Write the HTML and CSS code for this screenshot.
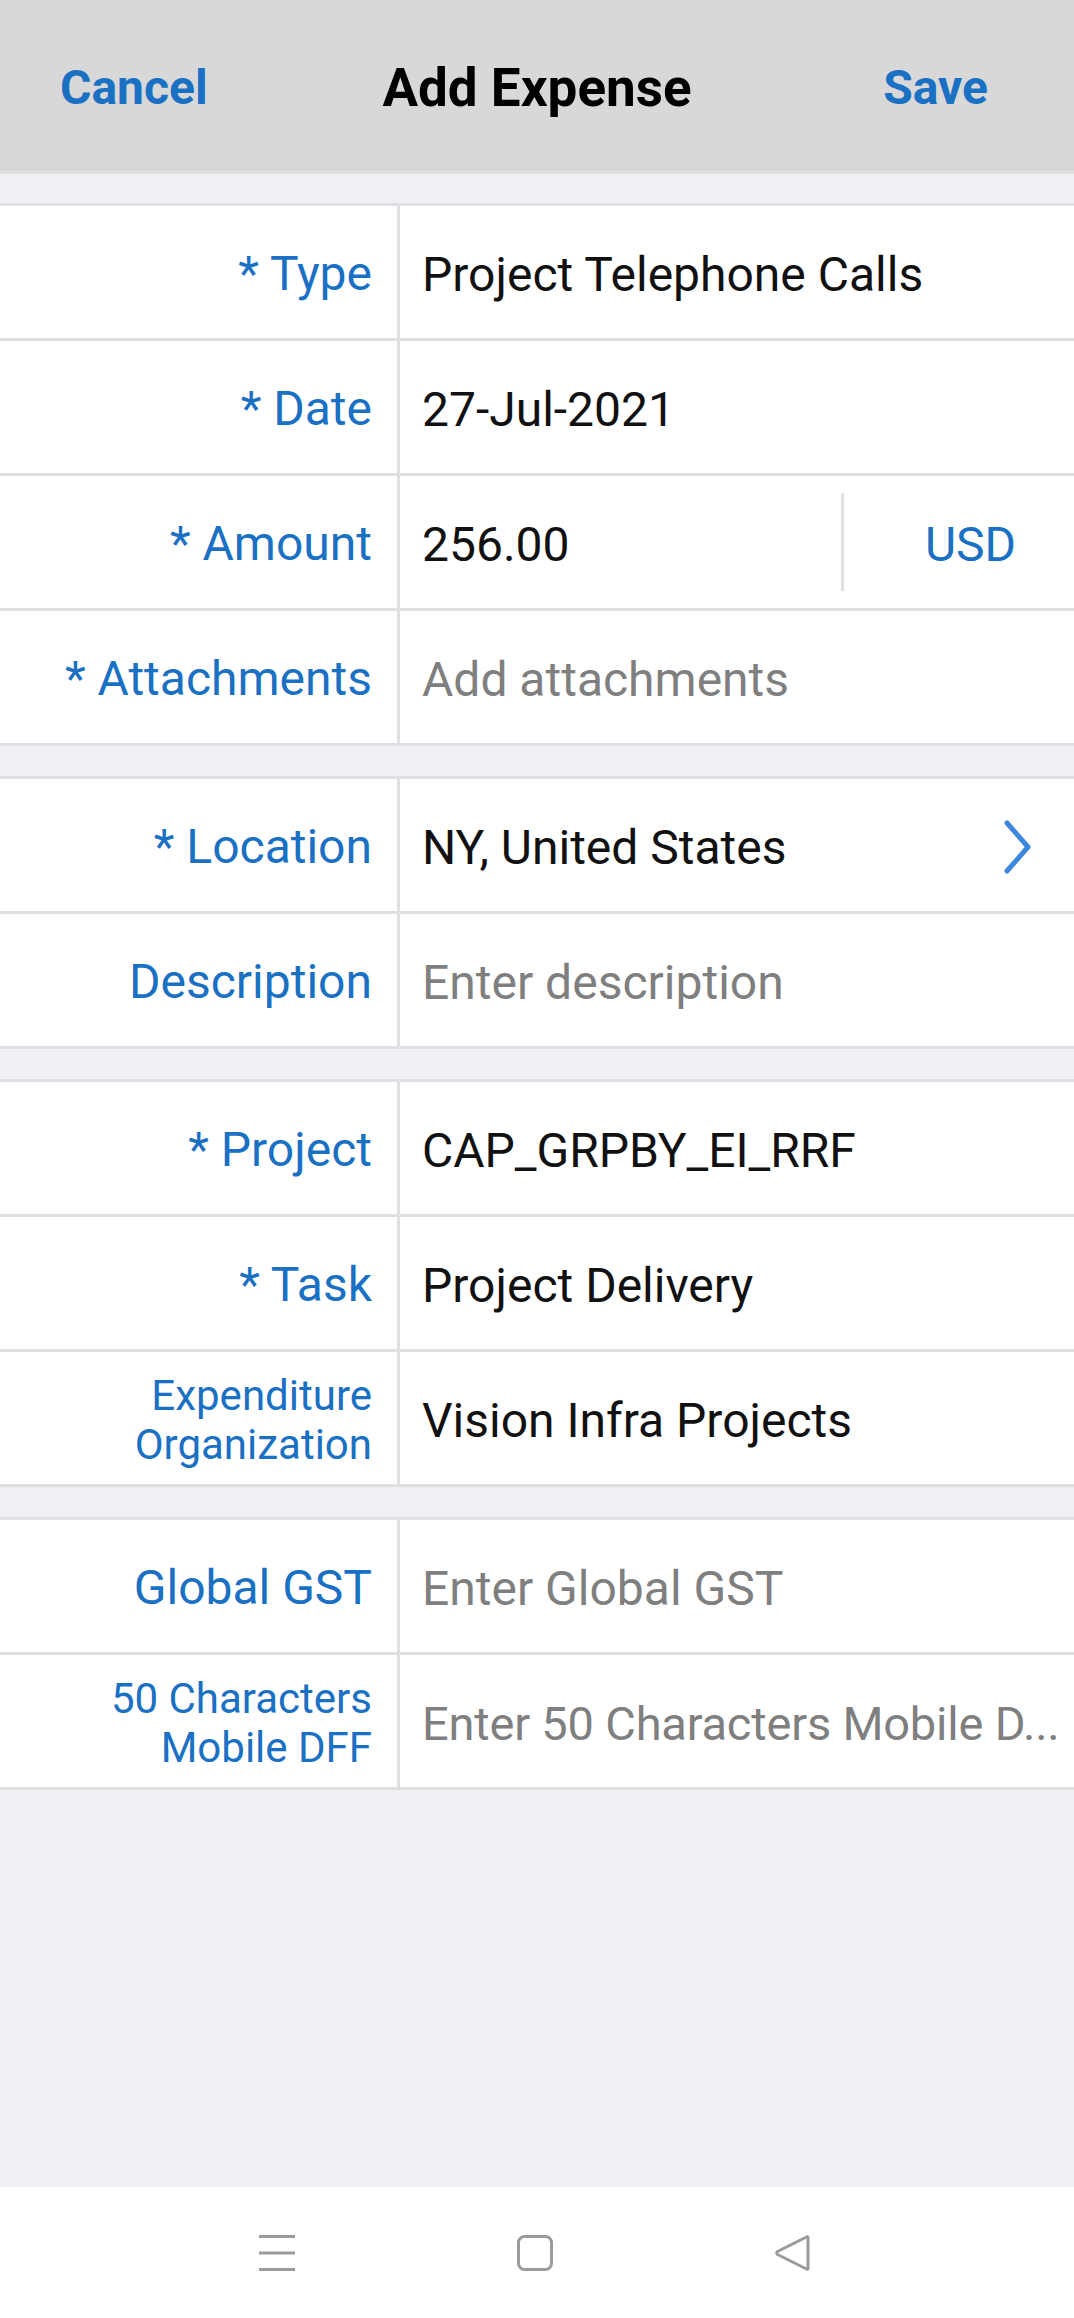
FILE: index.html
```html
<!DOCTYPE html>
<html>
<head>
<meta charset="utf-8">
<link rel="stylesheet" href="styles.css">
</head>
<body>
<div class="page">
  <header class="topbar">
    <span class="nav-btn left">Cancel</span>
    <span class="title">Add Expense</span>
    <span class="nav-btn right">Save</span>
  </header>
  <main class="content">
    <section class="group">
      <div class="row">
        <div class="label">* Type</div>
        <div class="value">Project Telephone Calls</div>
      </div>
      <div class="row">
        <div class="label">* Date</div>
        <div class="value">27-Jul-2021</div>
      </div>
      <div class="row">
        <div class="label">* Amount</div>
        <div class="value amount">
          <span class="amount-num">256.00</span>
          <span class="currency">USD</span>
        </div>
      </div>
      <div class="row">
        <div class="label">* Attachments</div>
        <div class="value placeholder">Add attachments</div>
      </div>
    </section>
    <section class="group">
      <div class="row">
        <div class="label">* Location</div>
        <div class="value with-chevron">
          <span>NY, United States</span>
          <svg class="chevron" width="30" height="56" viewBox="0 0 30 56"><polyline points="5,4 26,28 5,52" fill="none" stroke="#3d88dd" stroke-width="5" stroke-linecap="round" stroke-linejoin="round"/></svg>
        </div>
      </div>
      <div class="row">
        <div class="label">Description</div>
        <div class="value placeholder">Enter description</div>
      </div>
    </section>
    <section class="group">
      <div class="row">
        <div class="label">* Project</div>
        <div class="value">CAP_GRPBY_EI_RRF</div>
      </div>
      <div class="row">
        <div class="label">* Task</div>
        <div class="value">Project Delivery</div>
      </div>
      <div class="row">
        <div class="label small">Expenditure<br>Organization</div>
        <div class="value">Vision Infra Projects</div>
      </div>
    </section>
    <section class="group">
      <div class="row">
        <div class="label">Global GST</div>
        <div class="value placeholder">Enter Global GST</div>
      </div>
      <div class="row">
        <div class="label small">50 Characters<br>Mobile DFF</div>
        <div class="value placeholder"><span class="trunc">Enter 50 Characters Mobile D...</span></div>
      </div>
    </section>
  </main>
  <nav class="sysnav">
    <svg class="nav-icon" width="36" height="36" viewBox="0 0 36 36"><rect x="0" y="0" width="36" height="3" fill="#9b9b9b"/><rect x="0" y="16.5" width="36" height="3" fill="#9b9b9b"/><rect x="0" y="33" width="36" height="3" fill="#9b9b9b"/></svg>
    <svg class="nav-icon" width="36" height="36" viewBox="0 0 36 36"><rect x="1.5" y="1.5" width="33" height="33" rx="6" fill="none" stroke="#9b9b9b" stroke-width="3"/></svg>
    <svg class="nav-icon" width="36" height="36" viewBox="0 0 36 36"><path d="M33 2.5 L33 33.5 Q33 35 31.5 34 L2.5 19.5 Q1 18 2.5 16.5 L31.5 2 Q33 1 33 2.5 Z" fill="none" stroke="#9b9b9b" stroke-width="3" stroke-linejoin="round"/></svg>
  </nav>
</div>
</body>
</html>
```

FILE: styles.css
```css
* { box-sizing: border-box; }
html, body {
  margin: 0;
  padding: 0;
}
body {
  font-family: Roboto, "Noto Sans", "Liberation Sans", sans-serif;
  background: #efeff4;
  width: 1074px;
}
.page {
  display: flex;
  flex-direction: column;
  min-height: 2318px;
}
.topbar {
  height: 174px;
  background: #d8d8d8;
  display: grid;
  grid-template-columns: 1fr auto 1fr;
  align-items: center;
  padding: 4px 60px 0 60px;
  border-bottom: 3px solid #dfdfe2;
}
.nav-btn {
  font-size: 48px;
  font-weight: 700;
  color: #1a70c3;
}
.nav-btn.left { justify-self: start; }
.nav-btn.right { justify-self: end; margin-right: 26px; }
.title {
  font-size: 53px;
  font-weight: 700;
  color: #000;
}
.content {
  flex: 1;
}
.group {
  margin-top: 30px;
  border-top: 3px solid #e0e0e3;
  background: #fff;
}
.group:first-child {
  margin-top: 29px;
}
.row {
  display: flex;
  height: 135px;
  border-bottom: 3px solid #e0e0e3;
}
.label {
  width: 400px;
  flex: none;
  border-right: 3px solid #e0e0e3;
  padding-right: 25px;
  padding-top: 4px;
  display: flex;
  align-items: center;
  justify-content: flex-end;
  text-align: right;
  font-size: 48px;
  color: #1a70c3;
  line-height: 1.2;
}
.label.small {
  font-size: 42px;
  line-height: 49px;
}
.value {
  flex: 1;
  min-width: 0;
  display: flex;
  align-items: center;
  padding-left: 22px;
  padding-top: 4px;
  font-size: 48px;
  color: #111;
  white-space: nowrap;
}
.value.placeholder {
  color: #7f7f7f;
}
.trunc {
  font-size: 47px;
  letter-spacing: -0.2px;
}
.value.amount {
  padding-right: 0;
  padding-top: 0;
}
.amount-num {
  flex: 1;
  padding-top: 4px;
}
.currency {
  align-self: stretch;
  display: flex;
  align-items: center;
  justify-content: flex-end;
  width: 233px;
  margin: 17px 0;
  padding-top: 4px;
  border-left: 3px solid #e0e0e3;
  padding-right: 58px;
  color: #1a70c3;
}
.with-chevron {
  justify-content: space-between;
  padding-right: 42px;
}
.chevron {
  display: block;
}
.sysnav {
  height: 131px;
  background: #fff;
  display: flex;
  justify-content: center;
  align-items: center;
  gap: 222px;
  padding-right: 4px;
}
.nav-icon { display: block; }
```
